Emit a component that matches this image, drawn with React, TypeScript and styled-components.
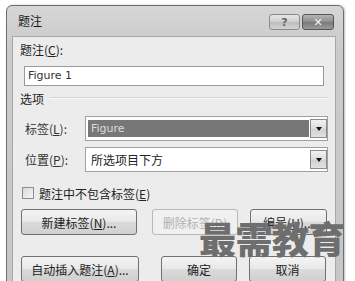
import React from 'react'
import styled, { createGlobalStyle } from 'styled-components'

const Global = createGlobalStyle`
  html, body {
    margin: 0;
    padding: 0;
    background: #fff;
    overflow: hidden;
  }
  body {
    font-family: "Noto Sans CJK SC", "DejaVu Sans", sans-serif;
    font-size: 12px;
    color: #222;
  }
`

const Stage = styled.div`
  position: relative;
  width: 355px;
  height: 281px;
  padding: 5px 0 0 6px;
  box-sizing: border-box;
  overflow: hidden;
`

// ダイアログの外枠
const Window = styled.div`
  width: 338px;
  height: 300px;
  box-sizing: border-box;
  border: 1px solid #6e6e6e;
  border-radius: 6px 6px 0 0;
  background: linear-gradient(#d6d6d6, #cbcbcb 40px, #c6c6c6);
  display: flex;
  flex-direction: column;
  box-shadow: 1px 0 2px rgba(0, 0, 0, 0.25);
`

const TitleBar = styled.div`
  height: 30px;
  display: flex;
  align-items: center;
  padding: 0 9px 0 11px;
`

const Title = styled.div`
  flex: 1;
  font-size: 12px;
  color: #1a1a1a;
  margin-top: -2px;
`

const CaptionButtons = styled.div`
  display: flex;
  gap: 2px;
  margin-top: 2px;
`

const CaptionButton = styled.div<{ $close?: boolean }>`
  width: ${(p) => (p.$close ? 32 : 31)}px;
  height: 16px;
  box-sizing: border-box;
  border: 1px solid ${(p) => (p.$close ? '#555' : '#8a8a8a')};
  border-radius: 3px;
  background: ${(p) =>
    p.$close
      ? 'linear-gradient(#b4b4b4, #8c8c8c 50%, #7a7a7a 51%, #9a9a9a)'
      : 'linear-gradient(#e6e6e6, #cfcfcf 50%, #bdbdbd 51%, #d2d2d2)'};
  display: flex;
  align-items: center;
  justify-content: center;
  font-family: "DejaVu Sans", sans-serif;
  font-weight: bold;
  font-size: 11px;
  color: ${(p) => (p.$close ? '#f4f4f4' : '#666')};
  line-height: 1;
`

const Panel = styled.div`
  flex: 1;
  margin: 0 7px 0 5px;
  border: 1px solid #a8a8a8;
  border-bottom: none;
  background: #ececec;
  padding: 5px 0 0 7px;
  display: flex;
  flex-direction: column;
`

const Label = styled.div`
  height: 16px;
  line-height: 16px;
  white-space: nowrap;
`

const TextInput = styled.div`
  margin: 8px 0 0 4px;
  width: 300px;
  height: 20px;
  box-sizing: border-box;
  border: 1px solid #9a9a9a;
  background: #fff;
  font-family: "DejaVu Sans", sans-serif;
  font-size: 11px;
  line-height: 18px;
  padding-left: 3px;
  color: #333;
`

const GroupHeader = styled.div`
  display: flex;
  align-items: center;
  gap: 6px;
  margin-top: 4px;
  height: 16px;
  &::after {
    content: '';
    flex: 0 0 278px;
    height: 1px;
    background: #d4d4d4;
    border-bottom: 1px solid #fafafa;
  }
`

const FieldRow = styled.div<{ $top: number }>`
  display: flex;
  align-items: center;
  margin-top: ${(p) => p.$top}px;
  padding-left: 5px;
`

const FieldLabel = styled.div`
  width: 60px;
  white-space: nowrap;
  color: #333;
`

const Combo = styled.div`
  width: 243px;
  height: 25px;
  box-sizing: border-box;
  border: 1px solid #a0a0a0;
  background: #fff;
  display: flex;
  align-items: stretch;
  padding: 2px 0 2px 2px;
`

const ComboValue = styled.div<{ $selected?: boolean }>`
  flex: 1;
  margin: ${(p) => (p.$selected ? '1px 0' : '0')};
  background: ${(p) => (p.$selected ? '#777' : 'transparent')};
  color: ${(p) => (p.$selected ? '#dcdcdc' : '#222')};
  padding-left: 3px;
  display: flex;
  align-items: center;
  font-family: ${(p) => (p.$selected ? '"DejaVu Sans", sans-serif' : 'inherit')};
  font-size: ${(p) => (p.$selected ? '11px' : '12px')};
`

const DropButton = styled.div`
  width: 17px;
  margin-left: 1px;
  box-sizing: border-box;
  border: 1px solid #8a8a8a;
  background: linear-gradient(#f2f2f2, #dcdcdc 50%, #cfcfcf 51%, #e2e2e2);
  display: flex;
  align-items: center;
  justify-content: center;
  &::before {
    content: '';
    border-left: 3px solid transparent;
    border-right: 3px solid transparent;
    border-top: 4px solid #111;
  }
`

const CheckRow = styled.div`
  display: flex;
  align-items: center;
  gap: 5px;
  margin-top: 14px;
  padding-left: 2px;
  height: 14px;
`

const Box = styled.div`
  width: 12px;
  height: 12px;
  box-sizing: border-box;
  border: 1px solid #8c8c8c;
  background: linear-gradient(135deg, #dadada, #f6f6f6);
`

const ButtonRow = styled.div<{ $top: number }>`
  display: flex;
  margin-top: ${(p) => p.$top}px;
  padding-left: 1px;
`

const Button = styled.div<{ $w: number; $gap?: number; $disabled?: boolean }>`
  width: ${(p) => p.$w}px;
  margin-left: ${(p) => p.$gap ?? 0}px;
  height: 26px;
  box-sizing: border-box;
  border: 1px solid ${(p) => (p.$disabled ? '#b8b8b8' : '#707070')};
  border-radius: 3px;
  background: ${(p) =>
    p.$disabled
      ? '#f0f0f0'
      : 'linear-gradient(#f4f4f4, #e8e8e8 50%, #dadada 51%, #d0d0d0)'};
  color: ${(p) => (p.$disabled ? '#b0b0b0' : '#222')};
  display: flex;
  align-items: center;
  justify-content: center;
  white-space: nowrap;
`

const Watermark = styled.div`
  position: absolute;
  left: 199px;
  top: 216px;
  font-family: "Noto Sans CJK SC", sans-serif;
  font-weight: 900;
  font-size: 37px;
  line-height: 1.2;
  letter-spacing: -0.5px;
  color: #6e6e6e;
`

export default function App() {
  return (
    <Stage>
      <Global />
      <Window>
        <TitleBar>
          <Title>题注</Title>
          <CaptionButtons>
            <CaptionButton>?</CaptionButton>
            <CaptionButton $close>✕</CaptionButton>
          </CaptionButtons>
        </TitleBar>
        <Panel>
          <Label>
            题注(<u>C</u>):
          </Label>
          <TextInput>Figure 1</TextInput>
          <GroupHeader>选项</GroupHeader>
          <FieldRow $top={10}>
            <FieldLabel>
              标签(<u>L</u>):
            </FieldLabel>
            <Combo>
              <ComboValue $selected>Figure</ComboValue>
              <DropButton />
            </Combo>
          </FieldRow>
          <FieldRow $top={6}>
            <FieldLabel>
              位置(<u>P</u>):
            </FieldLabel>
            <Combo>
              <ComboValue>所选项目下方</ComboValue>
              <DropButton />
            </Combo>
          </FieldRow>
          <CheckRow>
            <Box />
            <span>
              题注中不包含标签(<u>E</u>)
            </span>
          </CheckRow>
          <ButtonRow $top={9}>
            <Button $w={116}>
              新建标签(<u>N</u>)...
            </Button>
            <Button $w={86} $gap={15} $disabled>
              删除标签(<u>D</u>)
            </Button>
            <Button $w={77} $gap={12}>
              编号(<u>U</u>)...
            </Button>
          </ButtonRow>
          <ButtonRow $top={21}>
            <Button $w={118}>
              自动插入题注(<u>A</u>)...
            </Button>
            <Button $w={76} $gap={22}>
              确定
            </Button>
            <Button $w={77} $gap={12}>
              取消
            </Button>
          </ButtonRow>
        </Panel>
      </Window>
      <Watermark>最需教育</Watermark>
    </Stage>
  )
}
